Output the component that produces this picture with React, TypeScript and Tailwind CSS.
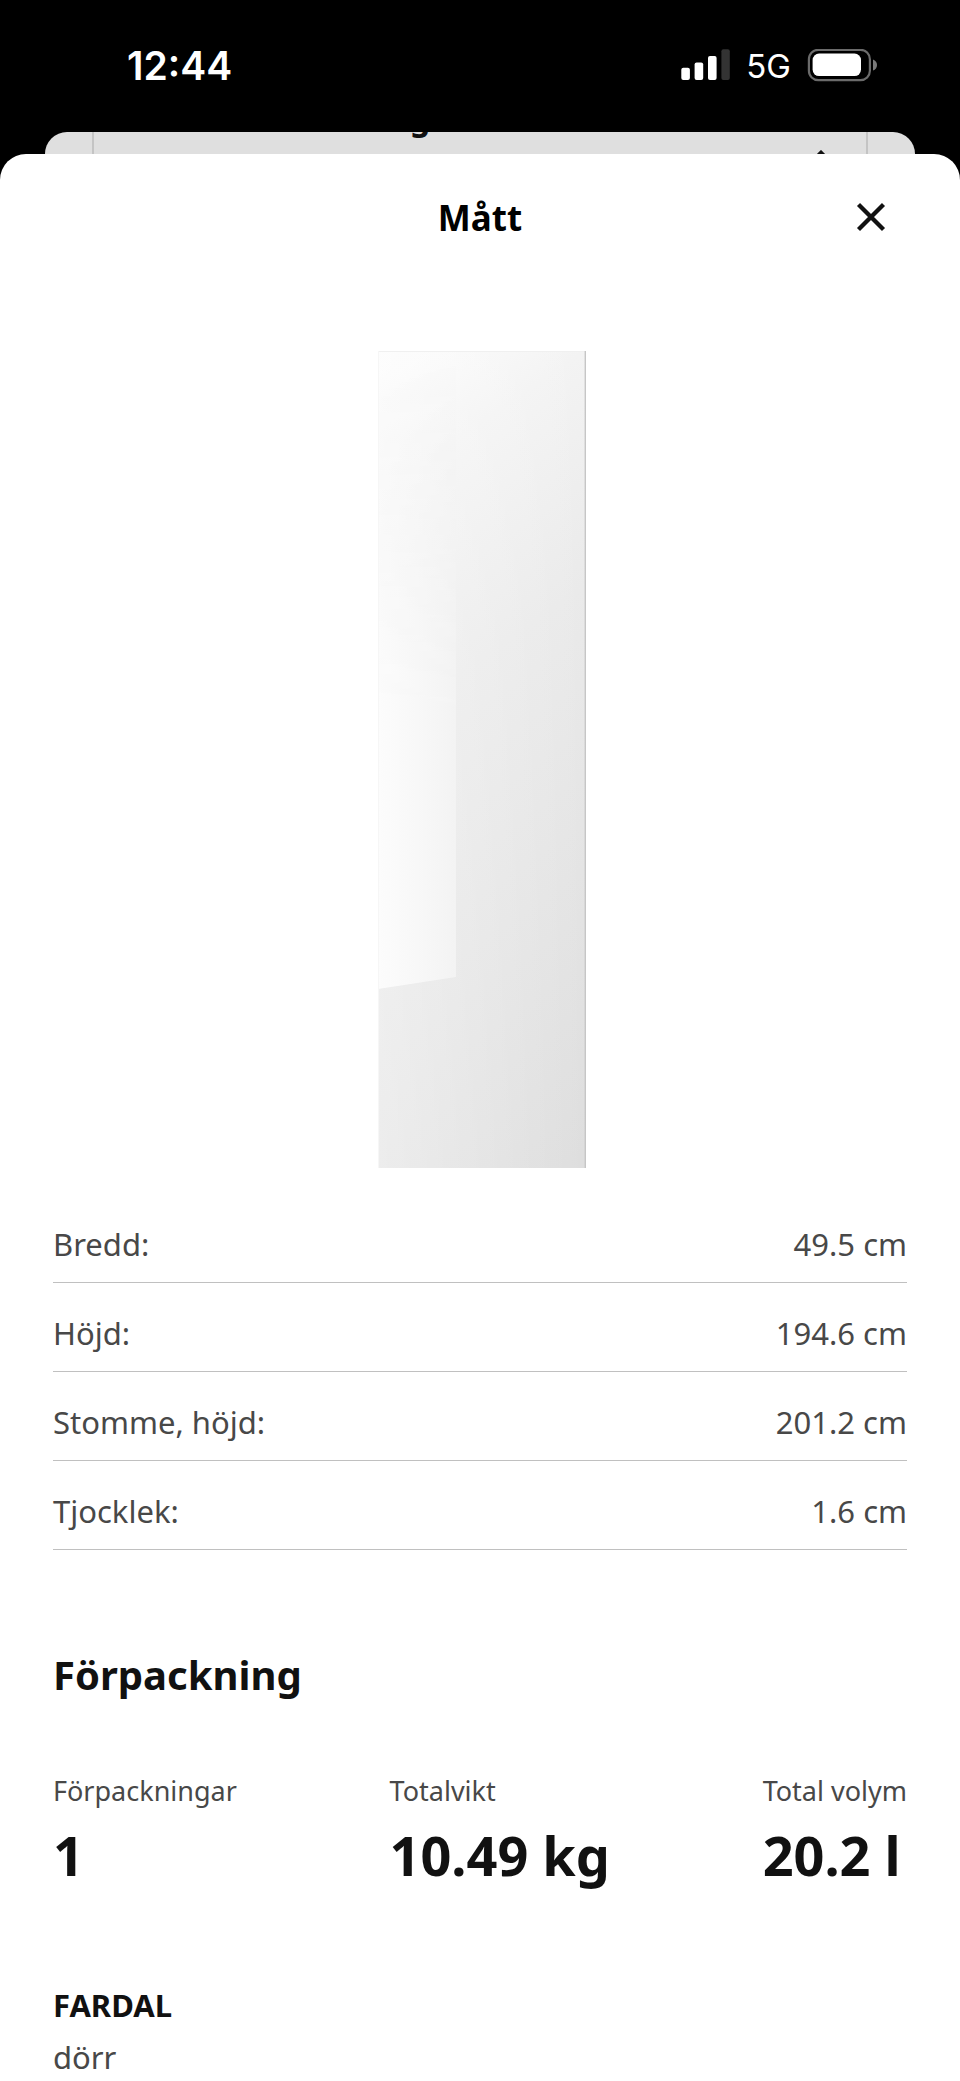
import React from 'react';

interface Measurement {
    label: string;
    value: string;
}

const MEASUREMENTS: Measurement[] = [
    { label: 'Bredd:', value: '49.5 cm' },
    { label: 'Höjd:', value: '194.6 cm' },
    { label: 'Stomme, höjd:', value: '201.2 cm' },
    { label: 'Tjocklek:', value: '1.6 cm' },
];

const PACKAGE_TOTALS: Measurement[] = [
    { label: 'Förpackningar', value: '1' },
    { label: 'Totalvikt', value: '10.49 kg' },
    { label: 'Total volym', value: '20.2 l' },
];

const SignalIcon: React.FC = () => (
    <svg width="49" height="34" viewBox="0 0 49 34" fill="#fff" aria-hidden="true">
        <rect x="0.3" y="18.7" width="8.6" height="12.3" rx="2" />
        <rect x="13.6" y="13.5" width="8.6" height="17.5" rx="2" />
        <rect x="27" y="7" width="8.6" height="24" rx="2" />
        <rect x="40.4" y="0.2" width="8.4" height="30.8" rx="2" fill="#333" />
    </svg>
);

const BatteryIcon: React.FC = () => (
    <svg width="70" height="34" viewBox="0 0 70 34" aria-hidden="true">
        <rect x="1.9" y="0.8" width="61" height="30.4" rx="9.5" fill="none" stroke="#6b6b6b" strokeWidth="2.2" />
        <rect x="5.6" y="4.5" width="48.4" height="22.6" rx="6.5" fill="#fff" />
        <path d="M66 10.4c2.6.9 4 3 4 5.5s-1.4 4.7-4 5.6z" fill="#7a7a7a" />
    </svg>
);

const StatusBar: React.FC = () => (
    <div className="flex h-[132px] items-center justify-between pl-[127px] pr-[83px] font-['Inter',sans-serif] text-white">
        <span className="text-[39px] leading-[48px] font-semibold">12:44</span>
        <div className="flex items-center gap-4">
            <SignalIcon />
            <span className="text-[33px] leading-[48px]">5G</span>
            <BatteryIcon />
        </div>
    </div>
);

// The sheet that sits underneath the open one, only its top edge shows
const SheetBehind: React.FC = () => (
    <div className="mx-[45px] h-16 overflow-hidden rounded-t-[22px] bg-[#dfdfdf] px-[47px]" aria-hidden="true">
        <div className="relative h-full border-x-2 border-[#c4c4c4]">
            <span className="absolute -top-[38px] left-[316px] text-[32px] leading-[48px] font-bold text-[#111]">g</span>
            <svg className="absolute top-[18px] right-9" width="18" height="12" viewBox="0 0 18 12" fill="none" stroke="#111" strokeWidth="3">
                <path d="M1 10l8-8 8 8" />
            </svg>
        </div>
    </div>
);

const DoorDrawing: React.FC = () => (
    <svg width="211" height="818" viewBox="-3 0 211 818" role="img" aria-label="FARDAL dörr">
        <defs>
            <linearGradient id="door" gradientUnits="userSpaceOnUse" x1="0" y1="0" x2="440" y2="640">
                <stop offset="0" stopColor="#fcfcfc" />
                <stop offset="0.15" stopColor="#f3f3f3" />
                <stop offset="0.4" stopColor="#eaeaea" />
                <stop offset="1" stopColor="#dedede" />
            </linearGradient>
            <linearGradient id="sheen" x1="0" y1="0" x2="1" y2="0">
                <stop offset="0" stopColor="#fff" stopOpacity="0.4" />
                <stop offset="1" stopColor="#fff" stopOpacity="0" />
            </linearGradient>
            <linearGradient id="reflection" x1="0" y1="0" x2="1" y2="0">
                <stop offset="0" stopColor="#fcfcfc" />
                <stop offset="0.5" stopColor="#f8f8f8" />
                <stop offset="1" stopColor="#f3f3f3" />
            </linearGradient>
            <linearGradient id="reflectionFade" x1="0" y1="0" x2="0" y2="1">
                <stop offset="0" stopColor="#fff" stopOpacity="0" />
                <stop offset="0.45" stopColor="#fff" />
            </linearGradient>
            <mask id="reflectionMask">
                <rect width="208" height="818" fill="url(#reflectionFade)" />
            </mask>
        </defs>
        <rect width="208" height="817" fill="url(#door)" />
        <rect width="208" height="817" fill="url(#sheen)" />
        <path d="M0 0h78v626L0 638z" fill="url(#reflection)" mask="url(#reflectionMask)" />
        <path d="M0 .5h208" stroke="#f0f0f0" />
        <path d="M.5 0v817" stroke="#f6f6f6" />
        <path d="M207.3 0v817" stroke="#c6c6c6" strokeWidth="1.4" />
    </svg>
);

const App: React.FC = () => {
    return (
        <div className="flex min-h-screen flex-col bg-black font-['Noto_Sans',sans-serif] text-[#484848]">
            <StatusBar />
            <SheetBehind />

            <main className="relative -mt-[42px] grow rounded-t-[26px] bg-white px-[53px]">
                <header className="grid h-32 grid-cols-[1fr_auto_1fr] items-center">
                    <h1 className="col-start-2 text-[35px] leading-[48px] font-bold text-black">Mått</h1>
                    <button type="button" aria-label="Stäng" className="mr-[11px] justify-self-end p-2">
                        <svg width="34" height="34" viewBox="0 0 34 34" fill="none" stroke="#111" strokeWidth="4.3">
                            <path d="M4.5 3.5l25 25M29.5 3.5l-25 25" />
                        </svg>
                    </button>
                </header>

                <div className="mt-[69px] flex justify-center">
                    <DoorDrawing />
                </div>

                <dl className="mt-[25px] text-[31px] leading-[48px]">
                    {MEASUREMENTS.map(item => (
                        <div key={item.label} className="flex justify-between border-b border-[#c0c0c0] pt-[26px] pb-[14px]">
                            <dt>{item.label}</dt>
                            <dd>{item.value}</dd>
                        </div>
                    ))}
                </dl>

                <h2 className="mt-[97px] text-[40px] leading-[56px] font-bold text-[#111]">Förpackning</h2>
                <dl className="mt-[68px] flex justify-between">
                    {PACKAGE_TOTALS.map(item => (
                        <div key={item.label}>
                            <dt className="text-[27px] leading-[40px]">{item.label}</dt>
                            <dd className="mt-2 text-[54px] leading-[72px] font-bold text-[#111]">{item.value}</dd>
                        </div>
                    ))}
                </dl>

                <h3 className="mt-[94px] text-[31px] leading-[40px] font-bold text-[#111]">FARDAL</h3>
                <p className="mt-3 text-[31px] leading-[40px]">dörr</p>
            </main>
        </div>
    );
};

export default App;
